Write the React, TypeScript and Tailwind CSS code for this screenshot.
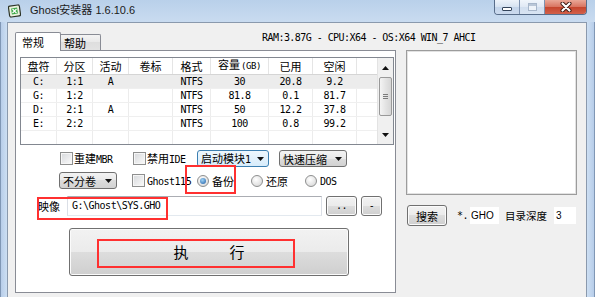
import React from "react";

const cjk = "font-['Noto_Sans_CJK_SC',sans-serif]";
const mono = "font-['DejaVu_Sans_Mono','Noto_Sans_CJK_SC',monospace] text-[10px] tracking-[-0.5px]";
const btn =
  "border border-[#707070] rounded-[3px] bg-[linear-gradient(#f2f2f2,#ebebeb_50%,#dddddd_50%,#cfcfcf)] shadow-[inset_0_0_0_1px_#fbfbfb]";

const cols = ["w-[36px]", "w-[36px]", "w-[36px]", "w-[44px]", "w-[38px]", "w-[58px]", "w-[44px]", "w-[44px]", "w-[20px]"];

const rows = [
  ["C:", "1:1", "A", "", "NTFS", "30", "20.8", "9.2"],
  ["G:", "1:2", "", "", "NTFS", "81.8", "0.1", "81.7"],
  ["D:", "2:1", "A", "", "NTFS", "50", "12.2", "37.8"],
  ["E:", "2:2", "", "", "NTFS", "100", "0.8", "99.2"],
  ["", "", "", "", "", "", "", ""],
];

function Arrow({ up }: { up?: boolean }) {
  return (
    <svg width="7" height="4" viewBox="0 0 7 4">
      <path d={up ? "M0 4 L3.5 0 L7 4 Z" : "M0 0 L7 0 L3.5 4 Z"} fill="#111" />
    </svg>
  );
}

function Check({ children }: { children: React.ReactNode }) {
  return (
    <div className="flex items-center">
      <span className="w-[13px] h-[13px] shrink-0 border border-[#8e8f8f] bg-[linear-gradient(135deg,#d6d8db,#fbfbfb)] shadow-[inset_0_0_0_1px_#f6f6f6]" />
      <span className="ml-[1px] leading-[14px] whitespace-nowrap">{children}</span>
    </div>
  );
}

function Radio({ on, children }: { on?: boolean; children: React.ReactNode }) {
  return (
    <div className="flex items-center">
      <span className="w-[12px] h-[12px] shrink-0 rounded-full border border-[#8e8f8f] bg-[radial-gradient(circle_at_40%_35%,#ffffff,#d2d2d2)] flex items-center justify-center">
        {on && (
          <span className="w-[6px] h-[6px] rounded-full bg-[radial-gradient(circle_at_40%_35%,#9fd3f5,#1d5ca6)]" />
        )}
      </span>
      <span className="ml-[3px] leading-[14px] whitespace-nowrap">{children}</span>
    </div>
  );
}

function Combo({
  className,
  active,
  children,
}: {
  className: string;
  active?: boolean;
  children: React.ReactNode;
}) {
  return (
    <div
      className={`${className} h-[17px] shrink-0 flex items-center justify-between pl-[3px] pr-[4px] rounded-[3px] border ${
        active
          ? "border-[#3c7fb1] bg-[linear-gradient(#eef7fd,#d7ecfb)]"
          : "border-[#707070] bg-[linear-gradient(#f3f3f3,#e9e9e9_50%,#dcdcdc_50%,#d2d2d2)]"
      }`}
    >
      <span className="leading-[14px] whitespace-nowrap">{children}</span>
      <Arrow />
    </div>
  );
}

function TitleIcon() {
  return (
    <svg width="13" height="14" viewBox="0 0 13 14">
      <rect x="1" y="1.5" width="11" height="11" rx="1.5" fill="#e9f2dd" stroke="#2c3326" strokeWidth="1.2" transform="rotate(-8 6.5 7)" />
      <rect x="3.5" y="4" width="6" height="6" fill="#3aa845" transform="rotate(-8 6.5 7)" />
      <path d="M4.5 5 L8.5 9 M8.5 5 L4.5 9" stroke="#fff" strokeWidth="1.2" />
    </svg>
  );
}

function ListView() {
  return (
    <div className="ml-[4px] mt-[6px] w-[374px] h-[88px] border border-[#828790] bg-white flex overflow-hidden">
      <div className="w-[356px] flex flex-col">
        <div className={`h-[24px] flex border-b border-[#d5d5d5] ${cjk} text-[11px] text-black`}>
          {["盘符", "分区", "活动", "卷标", "格式", "容量", "已用", "空闲", ""].map((h, i) => (
            <div
              key={i}
              className={`${cols[i]} shrink-0 flex items-end justify-center pb-[2px] ${i < 8 ? "border-r border-[#e5e5e5]" : ""}`}
            >
              <span className="leading-[12px] whitespace-nowrap">
                {h}
                {i === 5 && (
                  <span className="font-['DejaVu_Sans_Mono',monospace] text-[9px] tracking-[-0.4px] ml-[1px]">(GB)</span>
                )}
              </span>
            </div>
          ))}
        </div>
        {rows.map((r, ri) => (
          <div
            key={ri}
            className={`h-[14px] shrink-0 flex border-b border-[#efefef] ${ri === 0 ? "bg-[#ececec]" : ""}`}
          >
            {[...r, ""].map((c, ci) => (
              <div
                key={ci}
                className={`${cols[ci]} shrink-0 flex items-center justify-center ${mono} leading-[14px] text-black ${
                  ci < 8 ? "border-r border-[#ececec]" : ""
                }`}
              >
                {c}
              </div>
            ))}
          </div>
        ))}
      </div>
      <div className="w-[16px] flex flex-col bg-[#f0f0f0] border-l border-[#e3e3e3]">
        <div className="h-[19px] flex items-center justify-center">
          <Arrow up />
        </div>
        <div className="mx-[1px] h-[39px] border border-[#999999] rounded-[2px] bg-[linear-gradient(90deg,#f4f4f4,#e4e4e4_50%,#d6d6d6)] flex flex-col items-center justify-center gap-[1px]">
          <span className="w-[5px] h-px bg-[#7a7a7a]" />
          <span className="w-[5px] h-px bg-[#7a7a7a]" />
          <span className="w-[5px] h-px bg-[#7a7a7a]" />
        </div>
        <div className="flex-1" />
        <div className="h-[18px] flex items-center justify-center">
          <Arrow />
        </div>
      </div>
    </div>
  );
}

export default function App() {
  return (
    <div className="relative w-[595px] h-[297px] overflow-hidden bg-[#c4d8ef] flex flex-col text-black">
      {/* title bar */}
      <div className="h-[22px] shrink-0 flex items-start bg-[linear-gradient(#b9d0ea,#c9dbf0)]">
        <div className="ml-[8px] mt-[4px]">
          <TitleIcon />
        </div>
        <span className="ml-[9px] mt-[3px] leading-[14px] text-[11px] text-[#1b1b1b] font-['Liberation_Sans','Noto_Sans_CJK_SC',sans-serif]">
          Ghost安装器 1.6.10.6
        </span>
        <div className="ml-auto mr-[8px] flex h-[15px] rounded-b-[4px] border border-t-0 border-[#586d8a] overflow-hidden">
          <div className="w-[25px] h-full border-r border-[#7d92b0] bg-[linear-gradient(#edf3fa,#d6e2f1_50%,#c3d4ea_50%,#cbdaee)] flex items-end justify-center pb-[3px]">
            <span className="w-[10px] h-[4px] rounded-[1px] border border-[#34445b] bg-white" />
          </div>
          <div className="w-[25px] h-full border-r border-[#7d92b0] bg-[linear-gradient(#f0f5fb,#dfe8f4_50%,#d1deef_50%,#d8e4f2)] flex items-center justify-center">
            <span className="w-[9px] h-[8px] border border-[#a7b6ca] bg-[#eef3f9] shadow-[inset_0_2px_0_#b9c6d7]" />
          </div>
          <div className="w-[41px] h-full bg-[linear-gradient(#eaa797,#d8735f_50%,#c5442c_50%,#d2604a)] flex items-center justify-center">
            <svg width="12" height="10" viewBox="0 0 12 10">
              <path d="M2.5 1.5 L9.5 8.5 M9.5 1.5 L2.5 8.5" stroke="#3b1812" strokeWidth="4" strokeLinecap="round" />
              <path d="M2.5 1.5 L9.5 8.5 M9.5 1.5 L2.5 8.5" stroke="#ffffff" strokeWidth="2.2" strokeLinecap="round" />
            </svg>
          </div>
        </div>
      </div>

      <div className="flex flex-1">
        <div className="w-[7px] shrink-0 border-l border-[#8097b5] bg-[linear-gradient(90deg,#b7cde9,#cddff3)]" />
        {/* client area */}
        <div className="w-[580px] shrink-0 bg-[#f0f0f0] border border-b-0 border-[#8a99ad] flex flex-col pl-[7px] pt-[9px]">
          {/* tabs row */}
          <div className="h-[18px] flex items-start">
            <div className={`relative z-10 w-[46px] h-[19px] bg-white border border-b-0 border-[#898c95] rounded-t-[2px] pl-[6px] pt-[2px] ${cjk} text-[11px] leading-[14px]`}>
              常规
            </div>
            <div className={`mt-[2px] w-[40px] h-[16px] border border-l-0 border-b-0 border-[#898c95] rounded-tr-[2px] bg-[linear-gradient(#f4f4f4,#e8e8e8_50%,#dedede_50%,#e3e3e3)] pl-[3px] pt-[1px] ${cjk} text-[11px] leading-[14px]`}>
              帮助
            </div>
            <span className={`ml-[161px] ${mono} tracking-[-0.55px] leading-[12px] whitespace-nowrap`}>
              RAM:3.87G - CPU:X64 - OS:X64 WIN_7 AHCI
            </span>
          </div>

          <div className="flex items-start">
            {/* tab panel */}
            <div className={`w-[381px] h-[243px] shrink-0 bg-white border border-[#898c95] flex flex-col ${cjk} text-[11px]`}>
              <ListView />

              <div className="mt-[5px] h-[17px] flex items-center">
                <div className="ml-[44px] w-[73px] shrink-0">
                  <Check>
                    重建<span className={mono}>MBR</span>
                  </Check>
                </div>
                <div className="w-[64px] shrink-0">
                  <Check>
                    禁用<span className={mono}>IDE</span>
                  </Check>
                </div>
                <Combo className="w-[72px]" active>
                  启动模块<span className={mono}>1</span>
                </Combo>
                <Combo className="ml-[10px] w-[68px]">快速压缩</Combo>
              </div>

              <div className="mt-[5px] h-[17px] flex items-center">
                <Combo className="ml-[43px] w-[58px]">不分卷</Combo>
                <div className="ml-[15px] w-[65px] shrink-0">
                  <Check>
                    <span className={`${mono} ml-[1px]`}>Ghost115</span>
                  </Check>
                </div>
                <div className="w-[54px] shrink-0">
                  <Radio on>备份</Radio>
                </div>
                <div className="w-[54px] shrink-0">
                  <Radio>还原</Radio>
                </div>
                <Radio>
                  <span className={mono}>DOS</span>
                </Radio>
              </div>

              <div className="mt-[7px] h-[20px] flex items-center">
                <span className="ml-[22px] w-[29px] shrink-0 leading-[14px]">映像</span>
                <div className="w-[255px] h-[20px] shrink-0 border border-[#abadb3] border-x-[#dbdfe6] border-b-[#e3e9ef] bg-white flex items-center pl-[4px]">
                  <span className={`${mono} leading-[14px]`}>G:\Ghost\SYS.GHO</span>
                </div>
                <div className={`ml-[4px] w-[31px] h-[20px] shrink-0 ${btn} flex items-center justify-center ${mono} leading-[14px]`}>
                  ..
                </div>
                <div className={`ml-[4px] w-[21px] h-[20px] shrink-0 ${btn} flex items-center justify-center ${mono} leading-[14px]`}>
                  -
                </div>
              </div>

              <div className={`mt-[12px] ml-[53px] w-[280px] h-[48px] ${btn} flex items-center justify-center gap-[41px] text-[15px] leading-[18px]`}>
                <span>执</span>
                <span>行</span>
              </div>
            </div>

            {/* right column */}
            <div className={`ml-[10px] w-[171px] shrink-0 flex flex-col ${cjk} text-[11px]`}>
              <div className="h-[145px] border border-[#9c9c9c] bg-white shadow-[inset_0_0_0_1px_#e2e2e2]" />
              <div className="mt-[10px] h-[21px] flex items-center">
                <div className={`ml-[1px] w-[40px] h-[21px] shrink-0 ${btn} flex items-center justify-center leading-[14px]`}>
                  搜索
                </div>
                <span className={`ml-[10px] w-[8px] shrink-0 ${mono} leading-[14px]`}>*.</span>
                <div className="ml-[4px] w-[31px] h-[19px] shrink-0 bg-white border border-[#f0f0f0] flex items-center pl-[1px]">
                  <span className="font-['Liberation_Sans',sans-serif] text-[10px] leading-[12px]">GHO</span>
                </div>
                <span className="ml-[5px] w-[44px] shrink-0 whitespace-nowrap text-[10.5px] leading-[14px]">目录深度</span>
                <div className="ml-[4px] w-[24px] h-[19px] shrink-0 bg-white border border-[#f0f0f0] flex items-center pl-[2px]">
                  <span className="font-['Liberation_Sans',sans-serif] text-[10px] leading-[12px]">3</span>
                </div>
              </div>
            </div>
          </div>
        </div>
        <div className="w-[8px] shrink-0 border-r border-[#8097b5] bg-[linear-gradient(90deg,#cddff3,#b7cde9)]" />
      </div>

      {/* annotation boxes */}
      <div className="absolute left-[185px] top-[165px] w-[51px] h-[29px] border-2 border-[#ff3030]" />
      <div className="absolute left-[37px] top-[197px] w-[131px] h-[23px] border-2 border-[#ff3030]" />
      <div className="absolute left-[97px] top-[239px] w-[198px] h-[29px] border-2 border-[#ff3030]" />
    </div>
  );
}
